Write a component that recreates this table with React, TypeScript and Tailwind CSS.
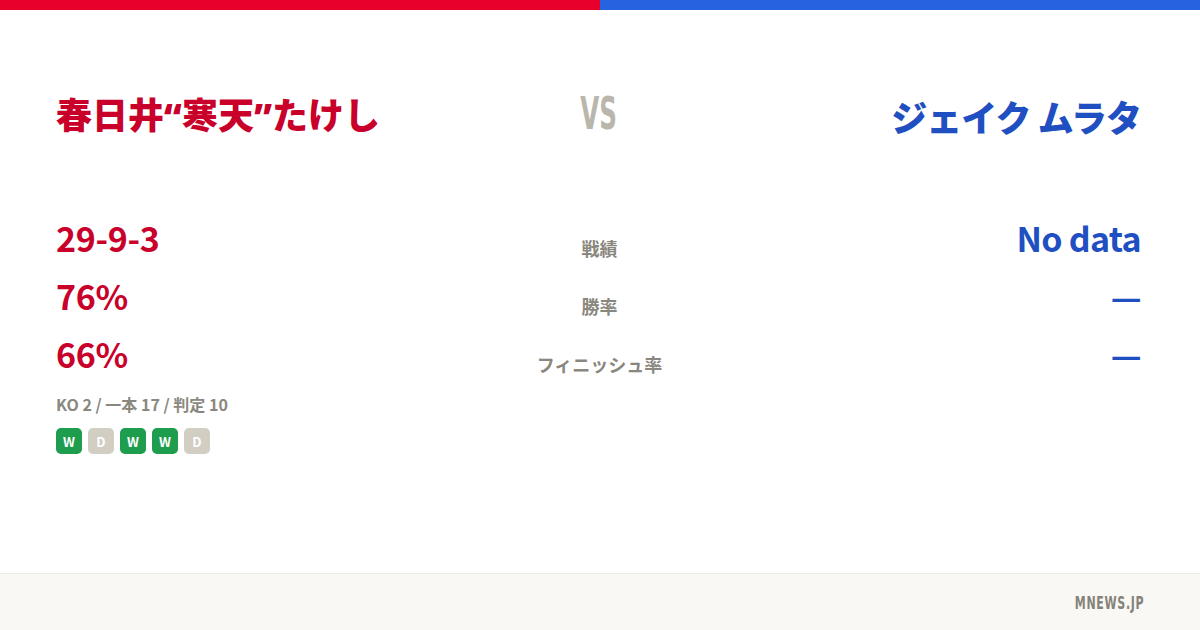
import React from "react";

const cjk = { fontFamily: '"Noto Sans CJK JP", "Noto Sans", sans-serif' };
const nameFont = { fontFamily: '"Noto Sans", "Noto Sans CJK JP", sans-serif' };
const cond = { fontFamily: '"DejaVu Sans Condensed", "DejaVu Sans", sans-serif' };

function Badge({ r }: { r: "W" | "D" }) {
  return (
    <div
      className={`w-[26px] h-[26px] shrink-0 rounded-[5px] flex items-center justify-center text-[13px] font-bold text-white leading-none ${
        r === "W" ? "bg-[#1f9d4f]" : "bg-[#d2cec4]"
      }`}
    >
      {r}
    </div>
  );
}

function Row({ left, label, right }: { left: string; label: string; right: React.ReactNode }) {
  return (
    <div className="grid grid-cols-[1fr_auto_1fr] items-start h-[58px]">
      <div className="text-[34px] font-bold text-[#c8002a] leading-[34px] tracking-[-0.3px]">{left}</div>
      <div className="text-[18px] font-bold text-[#8a877f] text-center leading-[18px] w-[200px] pt-[18px] pl-[2px]">{label}</div>
      <div className="text-[34px] font-bold text-[#1f4fc1] text-right leading-[34px] tracking-[-0.7px]">{right}</div>
    </div>
  );
}

export default function App() {
  return (
    <div className="w-[1200px] h-[630px] bg-white flex flex-col overflow-hidden" style={cjk}>
      <div className="flex h-[10px]">
        <div className="flex-1 bg-[#e8002d]" />
        <div className="flex-1 bg-[#2563e0]" />
      </div>
      <div className="flex-1 pl-14 pr-[59px] flex flex-col">
        <div className="grid grid-cols-[1fr_auto_1fr] items-center mt-[84px] h-[44px]">
          <div className="text-[36px] font-black text-[#c8002a] leading-none whitespace-nowrap" style={nameFont}>
            春日井“寒天”たけし
          </div>
          <div className="w-[200px] text-center text-[44px] font-bold text-[#b9b6ac] leading-none -mt-[5px]" style={cond}>
            <span className="inline-block scale-x-[0.62]">VS</span>
          </div>
          <div className="text-[36px] font-black text-[#1f4fc1] leading-none text-right whitespace-nowrap tracking-[-1px]">
            ジェイク ムラタ
          </div>
        </div>
        <div className="mt-[83px]">
          <Row left="29-9-3" label="戦績" right="No data" />
          <Row left="76%" label="勝率" right="—" />
          <Row left="66%" label="フィニッシュ率" right="—" />
        </div>
        <div className="text-[16px] font-bold text-[#8a877f] leading-none mt-[1px]">KO 2 / 一本 17 / 判定 10</div>
        <div className="flex gap-[6px] mt-[16px]">
          <Badge r="W" />
          <Badge r="D" />
          <Badge r="W" />
          <Badge r="W" />
          <Badge r="D" />
        </div>
      </div>
      <div className="h-[57px] bg-[#f9f8f4] border-t border-[#ebe9e3] flex items-center justify-end px-14">
        <span className="inline-block text-[18px] font-bold text-[#85827a] tracking-[1px] origin-right scale-x-[0.68]" style={cond}>
          MNEWS.JP
        </span>
      </div>
    </div>
  );
}
